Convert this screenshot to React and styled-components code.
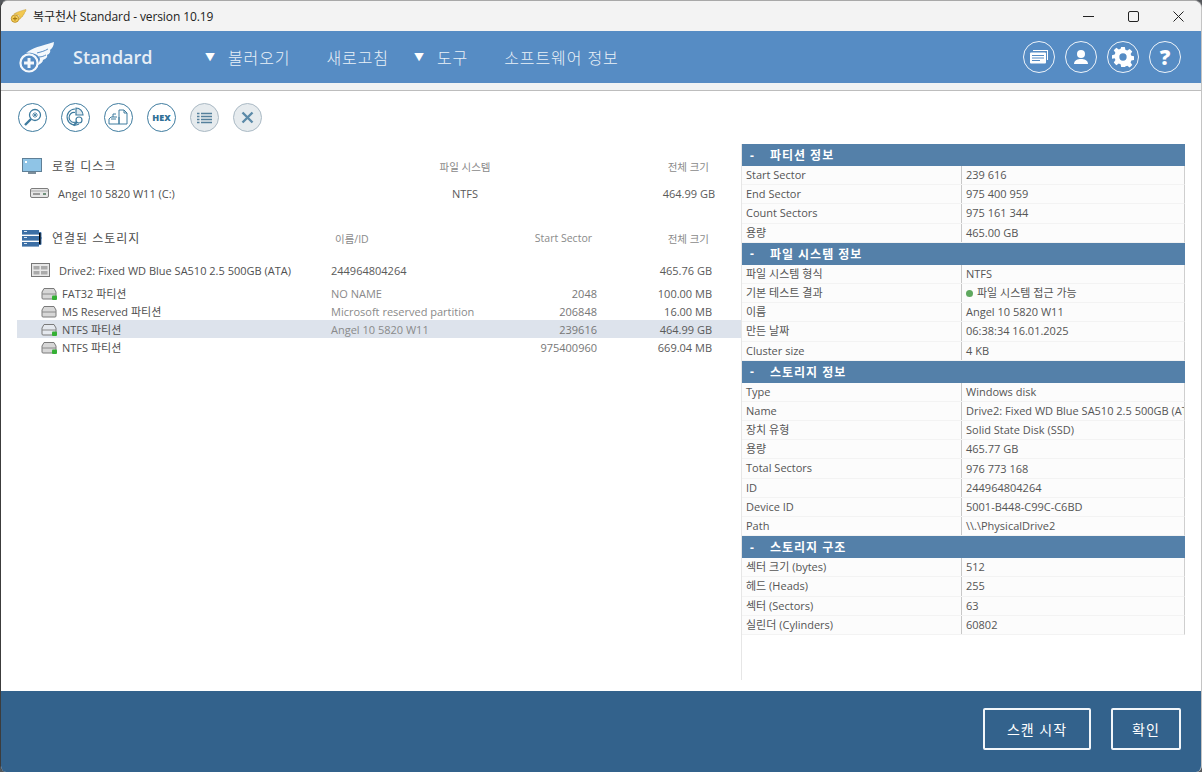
import React from 'react';
import styled, { createGlobalStyle } from 'styled-components';

const Global = createGlobalStyle`
  html, body { margin: 0; padding: 0; background: #55585c; }
  * { box-sizing: border-box; }
  #root { width: 1202px; height: 772px; overflow: hidden; }
`;
const FONT = `"Open Sans", "Noto Sans CJK KR", sans-serif`;

const Win = styled.div`
  width: 1202px; height: 772px; display: flex; flex-direction: column;
  background: #fff; border-radius: 8px 8px 6px 6px; overflow: hidden;
  border-left: 1px solid #3c3c3c; border-right: 1px solid #c4c4c4; border-top: 1px solid #a8a8a8;
  font-family: ${FONT}; color: #5a5a5a;
`;
const TitleBar = styled.div`
  height: 30px; flex: none; display: flex; align-items: center; background: #f3f3f3; padding-left: 9px;
`;
const TitleText = styled.div`
  font-size: 12px; color: #222; margin-left: 6px; flex: 1; letter-spacing: -0.1px;
`;
const WinBtn = styled.div`
  width: 45px; height: 30px; display: flex; align-items: center; justify-content: center;
`;
const Header = styled.div`
  height: 52px; flex: none; display: flex; align-items: center; background: #568cc4; padding: 0 20px 0 17px; color: #eaf1f8;
`;
const Brand = styled.div`
  font-size: 18px; font-weight: 600; width: 132px; margin-left: 17px; letter-spacing: 0;
  color: #e6eef6;
`;
const Arrow = styled.span`
  font-size: 10px; width: 23px; flex: none; color: #fff; position: relative; top: -1px;
`;
const NavItem = styled.div`
  font-size: 16px; letter-spacing: 0.9px; margin-right: ${p => p.$mr}px; white-space: nowrap; font-weight: 300;
`;
const HeaderTools = styled.div`
  margin-left: auto; display: flex; gap: 10px;
`;
const RoundBtn = styled.div`
  width: 32px; height: 32px; border-radius: 50%; border: 1.5px solid #eef4fa;
  display: flex; align-items: center; justify-content: center;
`;
const Strip = styled.div`
  height: 8px; flex: none; background: #f0f3f4; border-bottom: 1px solid #bdbdbd;
`;
const Toolbar = styled.div`
  height: 42px; flex: none; display: flex; gap: 14px; padding: 12px 0 0 17px;
`;
const ToolBtn = styled.div`
  width: 29px; height: 29px; border-radius: 50%;
  border: 1.4px solid ${p => p.$off ? '#aab9c4' : '#3f7c9f'};
  background: ${p => p.$off ? '#e6ebee' : '#fff'};
  display: flex; align-items: center; justify-content: center;
`;
const HexLabel = styled.span`
  font-size: 9px; font-weight: 800; color: #2f7096; font-family: "Open Sans", sans-serif; letter-spacing: 0.1px;
`;
const Main = styled.div`
  flex: 1; display: flex; padding-top: 11px; min-height: 0;
`;
const Left = styled.div`
  width: 724px; margin-left: 16px; flex: none; font-size: 11px;
`;
const SectionHead = styled.div`
  display: grid; grid-template-columns: ${p => p.$cols}; height: 20px; align-items: center;
  margin-top: ${p => p.$mt}px; padding-right: 32px; color: #8a8a8a; font-size: 10.5px;
`;
const SectionTitle = styled.div`
  display: flex; align-items: center; font-size: 12px; color: #4d4d4d; letter-spacing: 1px; padding-left: 5px; gap: 10px;
`;
const Cell = styled.div`
  text-align: ${p => p.$a || 'left'}; white-space: nowrap; color: ${p => p.$c || 'inherit'};
`;
const Row = styled.div`
  display: grid; grid-template-columns: ${p => p.$cols}; align-items: center;
  height: ${p => p.$h}px; margin-top: ${p => p.$mt || 0}px; margin-bottom: ${p => p.$mb || 0}px;
  padding-right: 26px; background: ${p => p.$sel ? '#dde3ec' : 'transparent'};
`;
const RowName = styled.div`
  display: flex; align-items: center; padding-left: ${p => p.$pl}px; gap: ${p => p.$gap}px; color: #505050; white-space: nowrap;
`;
const Right = styled.div`
  width: 444px; height: 536px; flex: none; border-left: 1px solid #e6e6e6; font-size: 11px;
`;
const InfoHead = styled.div`
  height: 22px; background: #5480a9; color: #fff; font-size: 12px; font-weight: 700; letter-spacing: 1px;
  display: flex; align-items: center; padding-left: 8px; gap: 15px;
`;
const InfoRow = styled.div`
  display: grid; grid-template-columns: 220px 222px; height: ${p => p.$h || 19}px; line-height: 18px;
  border-bottom: 1px solid #f3f3f3; background: #fcfcfc; border-right: 1px solid #cfcfcf;
`;
const InfoLabel = styled.div`
  padding-left: 4px; color: #555; white-space: nowrap; overflow: hidden; border-right: 1px solid #c8c8c8; 
`;
const InfoValue = styled.div`
  padding-left: 4px; color: #555; white-space: nowrap; overflow: hidden; display: flex; align-items: center; gap: 4px;
`;
const Dot = styled.span`
  width: 7px; height: 7px; border-radius: 50%; background: #5fa85f; flex: none;
`;
const Footer = styled.div`
  height: 81px; flex: none; background: #33628c; display: flex; align-items: flex-start; justify-content: flex-end;
  gap: 20px; padding: 17px 20px 0 0;
`;
const FootBtn = styled.div`
  width: ${p => p.$w}px; height: 42px; border: 2px solid #f2f6fa; border-radius: 2px; color: #fff;
  font-size: 14px; letter-spacing: 1px; display: flex; align-items: center; justify-content: center;
`;

const Wing = ({ size = 38, color = '#f4f8fc', accent }) => (
  <svg width={size} height={size * 0.84} viewBox="0 0 38 32" fill="none">
    <circle cx="11" cy="22" r="8.6" stroke={color} strokeWidth="2.2" fill={accent || 'none'} />
    <path d="M11 17v10M6 22h10" stroke={color} strokeWidth="3" />
    <path d="M8 12C14 7 23 5 36 1c0 4-2 7-4 8 1 1 0 4-3 5 1 2-1 4-4 5 0 2-2 4-5 5-1-1 4-5 1-8-2-3-8-5-13-4z" fill={color} />
    <path d="M19 12c4-1 8-2 11-4M21 16c3 0 5-1 7-2" stroke="#568cc4" strokeWidth="1" />
  </svg>
);
const Hdd = ({ dot = true, sel }) => (
  <svg width="16" height="13" viewBox="0 0 16 13">
    <path d="M1 5 3 1.5h10L15 5v6a1 1 0 0 1-1 1H2a1 1 0 0 1-1-1z" fill={sel ? '#e4e8ee' : '#d7d7d7'} stroke="#7a7a7a" />
    <path d="M1 7h14" stroke="#8a8a8a" />
    {dot && <rect x="11" y="8.5" width="5" height="4.5" rx="1" fill="#35b035" />}
  </svg>
);
const Drive = () => (
  <svg width="19" height="10" viewBox="0 0 19 10">
    <rect x=".5" y=".5" width="18" height="9" rx="1.5" fill="#e6e6e6" stroke="#7d7d7d" />
    <path d="M1 3h17" stroke="#a8a8a8" />
    <rect x="3" y="5" width="7" height="2" fill="#9a9a9a" /><rect x="13" y="5" width="3" height="2" fill="#6e8f7a" />
  </svg>
);
const Disk = () => (
  <svg width="19" height="14" viewBox="0 0 19 14">
    <rect x=".5" y=".5" width="18" height="13" fill="#e8e8e8" stroke="#777" />
    <rect x="2.5" y="3" width="6" height="3.5" fill="#aaa" /><rect x="10" y="3" width="6.5" height="3.5" fill="#aaa" />
    <rect x="2.5" y="8" width="6" height="3.5" fill="#aaa" /><rect x="10" y="8" width="6.5" height="3.5" fill="#aaa" />
  </svg>
);
const Monitor = () => (
  <svg width="20" height="17" viewBox="0 0 20 17">
    <rect x=".5" y=".5" width="19" height="13" fill="#a9d4ef" stroke="#5f7f96" />
    <path d="M1 1h18v12H1z" fill="#8fc4e6" /><rect x="3" y="3" width="2" height="2" fill="#fff" />
    <path d="M6 14h8v2H6z" fill="#7e8f9b" />
  </svg>
);
const Servers = () => (
  <svg width="20" height="17" viewBox="0 0 20 17">
    <rect x="0" y="0" width="17" height="4.6" fill="#3c6fa5" /><rect x="0" y="6" width="17" height="4.6" fill="#3c6fa5" /><rect x="0" y="12" width="17" height="4.6" fill="#3c6fa5" />
    <path d="M2 1.5h3M2 7.5h3M2 13.5h3" stroke="#dce8f3" />
    <path d="M17 2.5h2v12h-2M19 8h1" stroke="#3c6fa5" />
  </svg>
);
const S = '#3f7c9f';
const IconSearch = () => (
  <svg width="21" height="21" viewBox="0 0 21 21" fill="none" stroke={S} strokeWidth="1.3">
    <circle cx="13" cy="8" r="5.5" /><path d="M13 5v6M10 8h6M11 6l4 4M15 6l-4 4" strokeWidth=".8" />
    <path d="M9 12 3 18" strokeWidth="2.4" />
  </svg>
);
const IconPie = () => (
  <svg width="23" height="23" viewBox="0 0 23 23" fill="none" stroke={S} strokeWidth="1.2">
    <path d="M11 3a8 8 0 1 0 4 15" /><path d="M11 6.5a5 5 0 1 0 1 9.5" />
    <path d="M12 2a7 7 0 0 1 7 7h-7z" fill="#dfe9ef" />
    <circle cx="15" cy="14" r="3" /><path d="m13 16-3.5 3.5" strokeWidth="1.8" />
  </svg>
);
const IconCopy = () => (
  <svg width="21" height="17" viewBox="0 0 21 17" fill="none" stroke={S} strokeWidth="1">
    <path d="M1 15V10l2-2h6M1 15h10V8M3 10h5M5 8V5h3" /><path d="M11 15h8V4l-3-3h-5z" /><path d="M16 1v3h3" />
  </svg>
);
const IconList = () => (
  <svg width="15" height="12" viewBox="0 0 15 12" stroke="#55809c" strokeWidth="1.5">
    <path d="M4 1.5h11M4 4.5h11M4 7.5h11M4 10.5h11M0 1.5h2.500M0 4.500h2.500M0 7.500h2.500M0 10.500h2.500" />
  </svg>
);
const IconX = () => (
  <svg width="13" height="13" viewBox="0 0 13 13" stroke="#5c8aa8" strokeWidth="2.4"><path d="m1.500 1.500 10 10M11.500 1.500l-10 10" /></svg>
);
const IconCards = () => (
  <svg width="20" height="16" viewBox="0 0 20 16">
    <path d="M4 1h15v10h-1V2H4z" fill="#fff" />
    <rect x="1" y="3.500" width="16" height="11" fill="#fff" rx="1" />
    <path d="M3 6.500h12M3 9h12M3 11.500h8" stroke="#568cc4" />
  </svg>
);
const IconUser = () => (
  <svg width="16" height="16" viewBox="0 0 16 16" fill="#fff">
    <circle cx="8" cy="5" r="4" /><path d="M1 15c0-4 4-5 7-5s7 1 7 5z" />
  </svg>
);
const IconGear = () => (
  <svg width="22" height="22" viewBox="0 0 24 24" fill="#fff">
    <path fillRule="evenodd" d="M10 1h4l.6 3.200 2 .8L19.300 3.200l2.800 2.800-1.800 2.700.8 2 3.100.6v4l-3.100.6-.8 2 1.800 2.700-2.800 2.800-2.700-1.800-2 .8L14 23h-4l-.6-3.100-2-.8-2.700 1.800-2.800-2.800 1.800-2.700-.8-2L0 14v-4l2.900-.6.8-2L1.900 4.700 4.700 1.900l2.700 1.800 2-.8zM12 8a4 4 0 1 0 0 8 4 4 0 0 0 0-8z" />
  </svg>
);
const Q = styled.span`
  color: #fff; font-size: 21px; font-weight: 800; font-family: "Open Sans", sans-serif; line-height: 1;
`;

const infoSections = [
  ['파티션 정보', [['Start Sector', '239 616'], ['End Sector', '975 400 959'], ['Count Sectors', '975 161 344'], ['용량', '465.00 GB']]],
  ['파일 시스템 정보', [['파일 시스템 형식', 'NTFS'], ['기본 테스트 결과', '파일 시스템 접근 가능', true], ['이름', 'Angel 10 5820 W11'], ['만든 날짜', '06:38:34 16.01.2025'], ['Cluster size', '4 KB']]],
  ['스토리지 정보', [['Type', 'Windows disk'], ['Name', 'Drive2: Fixed WD Blue SA510 2.5 500GB (ATA)'], ['장치 유형', 'Solid State Disk (SSD)'], ['용량', '465.77 GB'], ['Total Sectors', '976 773 168'], ['ID', '244964804264'], ['Device ID', '5001-B448-C99C-C6BD'], ['Path', '\\\\.\\PhysicalDrive2']]],
  ['스토리지 구조', [['섹터 크기 (bytes)', '512'], ['헤드 (Heads)', '255'], ['섹터 (Sectors)', '63'], ['실린더 (Cylinders)', '60802']]],
];
const PCOLS = '314px 150px 116px 115px';
const parts = [
  ['FAT32 파티션', 'NO NAME', '2048', '100.00 MB', true],
  ['MS Reserved 파티션', 'Microsoft reserved partition', '206848', '16.00 MB', false],
  ['NTFS 파티션', 'Angel 10 5820 W11', '239616', '464.99 GB', true, true],
  ['NTFS 파티션', '', '975400960', '669.04 MB', true],
];

export default function App() {
  return (
    <Win>
      <Global />
      <TitleBar>
        <svg width="17" height="14" viewBox="0 0 38 32">
          <circle cx="11" cy="22" r="8.500" fill="#f5cf5a" stroke="#b98a20" strokeWidth="2" />
          <path d="M11 17v10M6 22h10" stroke="#a87a10" strokeWidth="2.500" />
          <path d="M8 12C14 7 23 5 36 1c0 4-2 7-4 8 1 1 0 4-3 5 1 2-1 4-4 5 0 2-2 4-5 5-1-1 4-5 1-8-2-3-8-5-13-4z" fill="#f2c850" stroke="#c09228" />
        </svg>
        <TitleText>복구천사 Standard - version 10.19</TitleText>
        <WinBtn><svg width="11" height="11"><path d="M0 5.500h11" stroke="#222" /></svg></WinBtn>
        <WinBtn><svg width="11" height="11"><rect x=".5" y=".5" width="10" height="10" rx="1.500" fill="none" stroke="#222" /></svg></WinBtn>
        <WinBtn><svg width="11" height="11"><path d="m.5.500 10 10M10.500.500l-10 10" stroke="#222" /></svg></WinBtn>
      </TitleBar>
      <Header>
        <Wing />
        <Brand>Standard</Brand>
        <Arrow>▼</Arrow>
        <NavItem $mr={36}>불러오기</NavItem>
        <NavItem $mr={25}>새로고침</NavItem>
        <Arrow>▼</Arrow>
        <NavItem $mr={36}>도구</NavItem>
        <NavItem $mr={0}>소프트웨어 정보</NavItem>
        <HeaderTools>
          <RoundBtn><IconCards /></RoundBtn>
          <RoundBtn><IconUser /></RoundBtn>
          <RoundBtn><IconGear /></RoundBtn>
          <RoundBtn><Q>?</Q></RoundBtn>
        </HeaderTools>
      </Header>
      <Strip />
      <Toolbar>
        <ToolBtn><IconSearch /></ToolBtn>
        <ToolBtn><IconPie /></ToolBtn>
        <ToolBtn><IconCopy /></ToolBtn>
        <ToolBtn><HexLabel>HEX</HexLabel></ToolBtn>
        <ToolBtn $off><IconList /></ToolBtn>
        <ToolBtn $off><IconX /></ToolBtn>
      </Toolbar>
      <Main>
        <Left>
          <SectionHead $mt={12} $cols="383px 130px 1fr">
            <SectionTitle><Monitor />로컬 디스크</SectionTitle>
            <Cell $a="center">파일 시스템</Cell>
            <Cell $a="right">전체 크기</Cell>
          </SectionHead>
          <Row $h={22} $mt={6} $cols="383px 130px 1fr">
            <RowName $pl={13} $gap={9}><Drive />Angel 10 5820 W11 (C:)</RowName>
            <Cell $a="center">NTFS</Cell>
            <Cell $a="right">464.99 GB</Cell>
          </Row>
          <SectionHead $mt={24} $cols="318px 145px 112px 1fr">
            <SectionTitle><Servers />연결된 스토리지</SectionTitle>
            <Cell>이름/ID</Cell>
            <Cell $a="right">Start Sector</Cell>
            <Cell $a="right">전체 크기</Cell>
          </SectionHead>
          <Row $h={24} $mt={10} $mb={2} $cols={PCOLS}>
            <RowName $pl={14} $gap={9}><Disk />Drive2: Fixed WD Blue SA510 2.5 500GB (ATA)</RowName>
            <Cell>244964804264</Cell>
            <Cell />
            <Cell $a="right">465.76 GB</Cell>
          </Row>
          {parts.map(([n, id, st, sz, dot, sel]) => (
            <Row key={n + st} $h={18} $cols={PCOLS} $sel={sel}>
              <RowName $pl={24} $gap={5}><Hdd dot={dot} sel={sel} />{n}</RowName>
              <Cell $c="#8a8a8a">{id}</Cell>
              <Cell $a="right" $c="#777">{st}</Cell>
              <Cell $a="right">{sz}</Cell>
            </Row>
          ))}
        </Left>
        <Right>
          {infoSections.map(([title, rows]) => (
            <div key={title}>
              <InfoHead><span>-</span>{title}</InfoHead>
              {rows.map(([k, v, ok]) => (
                <InfoRow key={k} $h={19.2}>
                  <InfoLabel>{k}</InfoLabel>
                  <InfoValue>{ok && <Dot />}{v}</InfoValue>
                </InfoRow>
              ))}
            </div>
          ))}
        </Right>
      </Main>
      <Footer>
        <FootBtn $w={108}>스캔 시작</FootBtn>
        <FootBtn $w={70}>확인</FootBtn>
      </Footer>
    </Win>
  );
}
